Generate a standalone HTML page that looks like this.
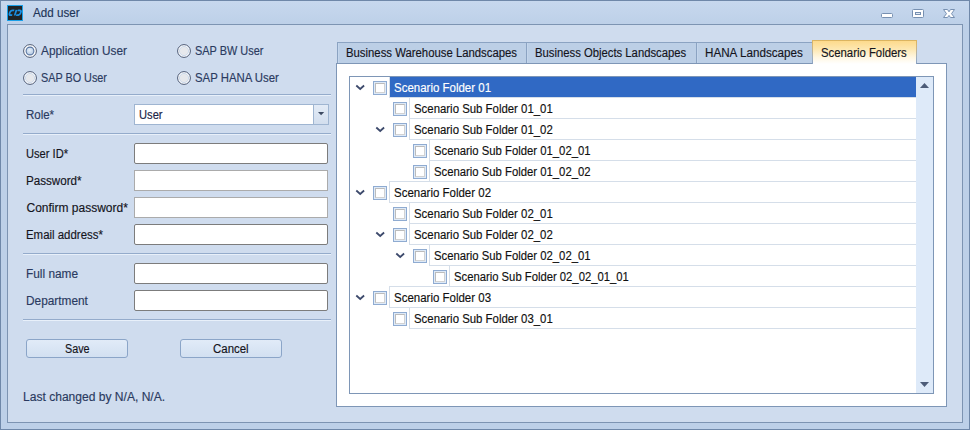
<!DOCTYPE html>
<html><head><meta charset="utf-8">
<style>
*{margin:0;padding:0;box-sizing:border-box}
html,body{width:970px;height:430px;overflow:hidden;background:#bdd0e8}
body{position:relative;font-family:"Liberation Sans",sans-serif;font-size:12px;line-height:12px}
.a{position:absolute}
.t{position:absolute;white-space:nowrap;transform-origin:0 0;-webkit-text-stroke:0.15px currentColor}
.frame{left:0;top:0;width:970px;height:430px;border:1px solid #6f88a9;background:linear-gradient(#c7d8ee,#bdd0e8 24px,#bdd0e8)}
.dlg{left:7px;top:24px;width:956px;height:399px;border:1px solid #7d94b2;background:#cfdcee}
.sep{left:23px;width:308px;height:2px;border-top:1px solid #94abcb;border-bottom:1px solid #e8f0fa}
.inp{left:134px;width:194px;background:#fff}
.r1{border:1px solid #7c7c7c;border-radius:2px}
.r2{border:1px solid #ababab}
.btn{height:19px;border:1px solid #8ba5c8;border-radius:3px;background:linear-gradient(#e1ebf8,#d2e0f1)}
.tab{top:42px;height:21px;background:#bccfe6;border:1px solid #8ba3c2;border-bottom:none;box-shadow:inset 1px 0 0 #c4d6ec}
.row{height:22px;border:1px solid #d5dee9;border-right:none}
.cb{width:14px;height:14px;border:1px solid #8fabd1;background:#fff;box-shadow:inset 0 0 0 1px #deeaf8}
.cb::after{content:"";box-sizing:border-box;position:absolute;left:1px;top:1px;width:10px;height:10px;border:1px solid #bcbcbc;border-right-color:#d2d2d2;border-bottom-color:#d2d2d2}

</style></head><body>
<div class="a frame"></div>
<div class="a" style="left:7px;top:5px;width:16px;height:16px;background:#1aa0e8"></div>
<div class="a" style="left:8px;top:6px;width:14px;height:14px;background:#1f2326"></div>
<svg class="a" style="left:7px;top:5px" width="16" height="16" viewBox="0 0 16 16"><path d="M6.4 5.3 H4.7 Q2.7 5.3 2.4 7.8 Q2.2 10.2 4.2 10.2 H5.6 M8.5 4.9 L8.1 10.5 M9.7 5.3 H11.6 Q13.8 5.3 13.4 7.8 Q13 10.2 10.8 10.2 H9.5" fill="none" stroke="#1a8ee2" stroke-width="1.8" transform="translate(2.2 0) skewX(-14)"/></svg>
<svg class="a" style="left:878px;top:5px" width="80" height="16" viewBox="0 0 80 16">
 <rect x="3.5" y="8.5" width="11" height="4" rx="1" fill="#fff" stroke="#7790b1"/>
 <rect x="34.5" y="4.5" width="11" height="8" rx="1" fill="#fff" stroke="#7790b1"/>
 <rect x="37.5" y="7.5" width="5" height="2" fill="#e4ecf6" stroke="#7790b1"/>
 <polygon points="65.5,4.5 69.5,4.5 71,6.8 72.5,4.5 76.5,4.5 73.5,8.7 76.5,12.5 72.5,12.5 71,10.4 69.5,12.5 65.5,12.5 68.5,8.7" fill="#fff" stroke="#7790b1" stroke-linejoin="round"/>
</svg>
<div class="a dlg"></div>
<svg class="a" style="left:23px;top:44px" width="14" height="14" viewBox="0 0 14 14"><defs><radialGradient id="sg" cx="0.45" cy="0.4" r="0.6"><stop offset="0" stop-color="#e6f0fa"/><stop offset="1" stop-color="#b4c8e1"/></radialGradient></defs><circle cx="7" cy="7" r="6.4" fill="#fff" stroke="#4e5a72" stroke-width="1"/><circle cx="7" cy="7" r="3.9" fill="url(#sg)" stroke="#5875a0" stroke-width="1.1"/></svg>
<svg class="a" style="left:177px;top:44px" width="14" height="14" viewBox="0 0 14 14"><circle cx="7" cy="7" r="6.4" fill="#fff" stroke="#4b5874" stroke-width="1"/><circle cx="7" cy="7" r="4.6" fill="#e6e8ec" stroke="#c3d3e8" stroke-width="0.8"/></svg>
<svg class="a" style="left:23px;top:71px" width="14" height="14" viewBox="0 0 14 14"><circle cx="7" cy="7" r="6.4" fill="#fff" stroke="#4b5874" stroke-width="1"/><circle cx="7" cy="7" r="4.6" fill="#e6e8ec" stroke="#c3d3e8" stroke-width="0.8"/></svg>
<svg class="a" style="left:177px;top:71px" width="14" height="14" viewBox="0 0 14 14"><circle cx="7" cy="7" r="6.4" fill="#fff" stroke="#4b5874" stroke-width="1"/><circle cx="7" cy="7" r="4.6" fill="#e6e8ec" stroke="#c3d3e8" stroke-width="0.8"/></svg>
<div class="a sep" style="top:94px"></div>
<div class="a" style="left:134px;top:104px;width:195px;height:21px;border:1px solid #9fb5d1;background:#fff"></div>
<div class="a" style="left:313px;top:104px;width:16px;height:21px;border:1px solid #9fb5d1;background:linear-gradient(#e3ebf6,#d2deee)"></div>
<svg class="a" style="left:317px;top:111px" width="8" height="5"><path d="M1 1 H7.2 L4.1 4.2 Z" fill="#3d4a62"/></svg>
<div class="a sep" style="top:133px"></div>
<div class="a inp r1" style="top:143px;height:21px"></div>
<div class="a inp r2" style="top:170px;height:21px"></div>
<div class="a inp r2" style="top:197px;height:21px"></div>
<div class="a inp r1" style="top:224px;height:21px"></div>
<div class="a sep" style="top:253px"></div>
<div class="a inp r1" style="top:263px;height:21px"></div>
<div class="a inp r1" style="top:290px;height:21px"></div>
<div class="a sep" style="top:319px"></div>
<div class="a btn" style="left:26px;top:339px;width:102px"></div>
<div class="a btn" style="left:180px;top:339px;width:102px"></div>
<div class="a" style="left:336px;top:63px;width:611px;height:344px;border:1px solid #7e96b6;background:#fff"></div>
<div class="a tab" style="left:337px;width:190px"></div>
<div class="a tab" style="left:526px;width:171px"></div>
<div class="a tab" style="left:696px;width:117px"></div>
<div class="a" style="left:812px;top:40px;width:105px;height:24px;background:linear-gradient(#dcb45e,#d5b677 25%,#9fafc2 75%,#8aa1c0)"></div>
<div class="a" style="left:813px;top:41px;width:103px;height:23px;background:linear-gradient(#fdda8c,#fde7b0 35%,#fff6e0 70%,#fff)"></div>
<div class="a" style="left:349px;top:76px;width:585px;height:318px;border:1px solid #7e96b6;background:#fff"></div>
<div class="a" style="left:916px;top:77px;width:17px;height:316px;background:#deeaf9"></div>
<svg class="a" style="left:919px;top:82px" width="11" height="7"><path d="M1 6 L5.5 1 L10 6 Z" fill="#4d5c78"/></svg>
<svg class="a" style="left:919px;top:381px" width="11" height="7"><path d="M1 1 L10 1 L5.5 6 Z" fill="#4d5c78"/></svg>

<div class="a row" style="left:389px;top:76px;width:527px"></div>
<div class="a" style="left:390px;top:77px;width:526px;height:20px;background:#3069c4"></div>
<div class="a row" style="left:409px;top:97px;width:507px"></div>
<div class="a row" style="left:409px;top:118px;width:507px"></div>
<div class="a row" style="left:429px;top:139px;width:487px"></div>
<div class="a row" style="left:429px;top:160px;width:487px"></div>
<div class="a row" style="left:389px;top:181px;width:527px"></div>
<div class="a row" style="left:409px;top:202px;width:507px"></div>
<div class="a row" style="left:409px;top:223px;width:507px"></div>
<div class="a row" style="left:429px;top:244px;width:487px"></div>
<div class="a row" style="left:449px;top:265px;width:467px"></div>
<div class="a row" style="left:389px;top:286px;width:527px"></div>
<div class="a row" style="left:409px;top:307px;width:507px"></div>
<svg class="a" style="left:355px;top:84px" width="11" height="8" viewBox="0 0 11 8"><path d="M1.3 1.5 L5.2 5 L9.1 1.5" fill="none" stroke="#3d4a6c" stroke-width="1.8"/></svg>
<div class="a cb" style="left:373px;top:81px"></div>
<div class="a cb" style="left:393px;top:102px"></div>
<svg class="a" style="left:375px;top:126px" width="11" height="8" viewBox="0 0 11 8"><path d="M1.3 1.5 L5.2 5 L9.1 1.5" fill="none" stroke="#3d4a6c" stroke-width="1.8"/></svg>
<div class="a cb" style="left:393px;top:123px"></div>
<div class="a cb" style="left:413px;top:144px"></div>
<div class="a cb" style="left:413px;top:165px"></div>
<svg class="a" style="left:355px;top:189px" width="11" height="8" viewBox="0 0 11 8"><path d="M1.3 1.5 L5.2 5 L9.1 1.5" fill="none" stroke="#3d4a6c" stroke-width="1.8"/></svg>
<div class="a cb" style="left:373px;top:186px"></div>
<div class="a cb" style="left:393px;top:207px"></div>
<svg class="a" style="left:375px;top:231px" width="11" height="8" viewBox="0 0 11 8"><path d="M1.3 1.5 L5.2 5 L9.1 1.5" fill="none" stroke="#3d4a6c" stroke-width="1.8"/></svg>
<div class="a cb" style="left:393px;top:228px"></div>
<svg class="a" style="left:395px;top:252px" width="11" height="8" viewBox="0 0 11 8"><path d="M1.3 1.5 L5.2 5 L9.1 1.5" fill="none" stroke="#3d4a6c" stroke-width="1.8"/></svg>
<div class="a cb" style="left:413px;top:249px"></div>
<div class="a cb" style="left:433px;top:270px"></div>
<svg class="a" style="left:355px;top:294px" width="11" height="8" viewBox="0 0 11 8"><path d="M1.3 1.5 L5.2 5 L9.1 1.5" fill="none" stroke="#3d4a6c" stroke-width="1.8"/></svg>
<div class="a cb" style="left:373px;top:291px"></div>
<div class="a cb" style="left:393px;top:312px"></div>
<div class="a" style="left:349px;top:76px;width:585px;height:318px;border:1px solid #7e96b6"></div>
<div class="t" style="left:33.30px;top:7px;color:#1d3458;transform:scaleX(0.9688)">Add user</div>
<div class="t" style="left:41.20px;top:45px;color:#2a3a60;transform:scaleX(0.9841)">Application User</div>
<div class="t" style="left:194.59px;top:45px;color:#2a3a60;transform:scaleX(0.9095)">SAP BW User</div>
<div class="t" style="left:41.10px;top:72px;color:#2a3a60;transform:scaleX(0.9014)">SAP BO User</div>
<div class="t" style="left:194.55px;top:72px;color:#2a3a60;transform:scaleX(0.9477)">SAP HANA User</div>
<div class="t" style="left:25.64px;top:109px;color:#2a3a60;transform:scaleX(0.9571)">Role*</div>
<div class="t" style="left:138.87px;top:109px;color:#1a2446;transform:scaleX(0.9292)">User</div>
<div class="t" style="left:25.57px;top:148px;color:#14141c;transform:scaleX(0.9273)">User ID*</div>
<div class="t" style="left:25.53px;top:175px;color:#14141c;transform:scaleX(0.9696)">Password*</div>
<div class="t" style="left:26.50px;top:202px;color:#14141c;transform:scaleX(1.0000)">Confirm password*</div>
<div class="t" style="left:25.55px;top:229px;color:#14141c;transform:scaleX(0.9525)">Email address*</div>
<div class="t" style="left:25.51px;top:268px;color:#2a3a60;transform:scaleX(0.9885)">Full name</div>
<div class="t" style="left:26.31px;top:295px;color:#2a3a60;transform:scaleX(0.9871)">Department</div>
<div class="t" style="left:65.00px;top:343px;color:#14141c;transform:scaleX(0.9000)">Save</div>
<div class="t" style="left:213.30px;top:343px;color:#14141c;transform:scaleX(0.9541)">Cancel</div>
<div class="t" style="left:22.60px;top:391px;color:#2a3a60;transform:scaleX(1.0050)">Last changed by N/A, N/A.</div>
<div class="t" style="left:345.56px;top:47px;color:#14141c;transform:scaleX(0.9450)">Business Warehouse Landscapes</div>
<div class="t" style="left:535.26px;top:47px;color:#14141c;transform:scaleX(0.9406)">Business Objects Landscapes</div>
<div class="t" style="left:704.53px;top:47px;color:#14141c;transform:scaleX(0.9710)">HANA Landscapes</div>
<div class="t" style="left:821.25px;top:47px;color:#14141c;transform:scaleX(0.9456)">Scenario Folders</div>
<div class="t" style="left:394.14px;top:82px;color:#ffffff;transform:scaleX(0.9570)">Scenario Folder 01</div>
<div class="t" style="left:413.55px;top:103px;color:#101010;transform:scaleX(0.9497)">Scenario Sub Folder 01_01</div>
<div class="t" style="left:413.55px;top:124px;color:#101010;transform:scaleX(0.9497)">Scenario Sub Folder 01_02</div>
<div class="t" style="left:433.56px;top:145px;color:#101010;transform:scaleX(0.9424)">Scenario Sub Folder 01_02_01</div>
<div class="t" style="left:433.56px;top:166px;color:#101010;transform:scaleX(0.9424)">Scenario Sub Folder 01_02_02</div>
<div class="t" style="left:394.14px;top:187px;color:#101010;transform:scaleX(0.9570)">Scenario Folder 02</div>
<div class="t" style="left:413.55px;top:208px;color:#101010;transform:scaleX(0.9497)">Scenario Sub Folder 02_01</div>
<div class="t" style="left:413.55px;top:229px;color:#101010;transform:scaleX(0.9497)">Scenario Sub Folder 02_02</div>
<div class="t" style="left:433.56px;top:250px;color:#101010;transform:scaleX(0.9424)">Scenario Sub Folder 02_02_01</div>
<div class="t" style="left:453.56px;top:271px;color:#101010;transform:scaleX(0.9389)">Scenario Sub Folder 02_02_01_01</div>
<div class="t" style="left:394.14px;top:292px;color:#101010;transform:scaleX(0.9570)">Scenario Folder 03</div>
<div class="t" style="left:413.55px;top:313px;color:#101010;transform:scaleX(0.9497)">Scenario Sub Folder 03_01</div>
</body></html>
